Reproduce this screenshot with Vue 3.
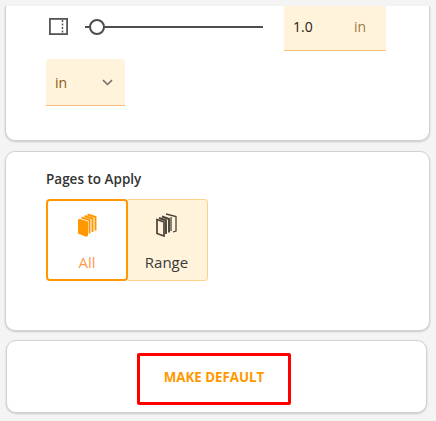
<script setup>
import { ref } from 'vue'

const margin = ref('1.0')
const unit = ref('in')
</script>

<template>
  <div class="page">
    <section class="card card-top">
      <div class="margin-row">
        <svg class="margin-icon" width="19" height="17" viewBox="0 0 19 17">
          <rect x="0.9" y="0.9" width="17.2" height="15.2" fill="none" stroke="#555" stroke-width="1.8" />
          <path d="M13.500 2v13" fill="none" stroke="#555" stroke-width="1.500" stroke-dasharray="2 1.500" />
        </svg>
        <div class="slider">
          <span class="thumb"></span>
        </div>
        <div class="field">
          <span class="value">{{ margin }}</span>
          <span class="suffix">{{ unit }}</span>
        </div>
      </div>
      <div class="select">
        <span>{{ unit }}</span>
        <svg width="11" height="7" viewBox="0 0 11 7">
          <path d="M1 1.200 5.500 5.500 10 1.200" fill="none" stroke="#7a7166" stroke-width="1.600" />
        </svg>
      </div>
    </section>

    <section class="card card-pages">
      <h3>Pages to Apply</h3>
      <div class="toggle">
        <button class="option active">
          <svg width="19" height="24" viewBox="0 0 19 24">
            <path d="M0 6.500 2 6l8 2.500V23l-2 .7-8-3.200z" fill="#ff9800" />
            <path d="M3.500 4.500 11.500 7v13.500M6.500 3l8 2.500V19M9.500 1.500l8 2.500v13.500" fill="none" stroke="#ff9800" stroke-width="1.900" />
          </svg>
          <span>All</span>
        </button>
        <button class="option">
          <svg width="21" height="24" viewBox="0 0 21 24">
            <path d="M1 6.500 8 9v14L1 20.500z" fill="none" stroke="#4a4338" stroke-width="1.700" />
            <path d="M3 5l7 2.500V21M6 3.500 13 6v13.500" fill="none" stroke="#4a4338" stroke-width="1.900" />
            <path d="M10 1l10 2.500V18l-3 1M15 4v14" fill="none" stroke="#4a4338" stroke-width="1.300" />
          </svg>
          <span>Range</span>
        </button>
      </div>
    </section>

    <section class="card card-action">
      <button class="make-default">MAKE DEFAULT</button>
    </section>
  </div>
</template>

<style>
html, body {
  margin: 0;
  background: #f4f4f4;
}
</style>

<style scoped>
.page {
  height: 421px;
  padding: 6px 6px 0 5px;
  box-sizing: border-box;
  display: flex;
  flex-direction: column;
  gap: 9px;
  background: #f4f4f4;
  font-family: "Open Sans", "Noto Sans", sans-serif;
  overflow: hidden;
}

.card {
  background: #fff;
  border: 1px solid #d2d2d2;
  border-radius: 10px;
  box-shadow: 0 1px 2px rgba(0, 0, 0, 0.18);
  box-sizing: border-box;
}

.card-top {
  height: 135px;
  padding: 0 0 0 40px;
  border-top: none;
  border-top-left-radius: 0;
  border-top-right-radius: 0;
  margin-bottom: 1px;
}

.margin-row {
  display: flex;
  align-items: center;
  height: 45px;
}

.margin-icon {
  margin-left: 3px;
  margin-top: -4px;
}

.slider {
  position: relative;
  width: 178px;
  height: 2px;
  margin: -3px 21px 0 17px;
  background: #4d4d4d;
}

.thumb {
  position: absolute;
  left: 4px;
  top: -7px;
  width: 12px;
  height: 12px;
  border: 2px solid #4d4d4d;
  border-radius: 50%;
  background: #fff;
}

.field {
  display: flex;
  justify-content: space-between;
  align-items: center;
  width: 102px;
  height: 45px;
  box-sizing: border-box;
  padding: 0 20px 3px 9px;
  background: #fff3dc;
  border-bottom: 1px solid #fdbf6f;
  font-size: 14px;
}

.value {
  color: #2a2118;
}

.suffix {
  color: #a07a45;
}

.select {
  display: flex;
  justify-content: space-between;
  align-items: center;
  width: 79px;
  height: 47px;
  box-sizing: border-box;
  margin-top: 8px;
  padding: 0 12px 0 9px;
  background: #fff3dc;
  border-bottom: 1px solid #f5bc7b;
  border-radius: 4px 4px 0 0;
  color: #8a5a20;
  font-size: 14px;
}

.card-pages {
  height: 180px;
  padding: 18px 0 0 40px;
}

h3 {
  margin: 0 0 11px;
  font-size: 13.500px;
  font-weight: 600;
  line-height: 18px;
  color: #333;
}

.toggle {
  display: flex;
}

.option {
  display: flex;
  flex-direction: column;
  align-items: center;
  width: 80px;
  height: 82px;
  box-sizing: border-box;
  padding: 13px 2px 0 0;
  gap: 15px;
  background: #fff3dc;
  border: 1px solid #ffcf8c;
  border-left: none;
  border-radius: 0 4px 4px 0;
  font-family: inherit;
  font-size: 15px;
  line-height: 20px;
  color: #3a3a3a;
}

.option.active {
  width: 82px;
  background: #fff;
  border: 2px solid #ff9800;
  border-radius: 4px;
  padding: 12px 0 0;
  color: #ff9a4d;
}

.card-action {
  height: 73px;
  margin-right: 3px;
  margin-left: 1px;
  padding-top: 12px;
  display: flex;
  justify-content: center;
  align-items: flex-start;
}

.make-default {
  width: 154px;
  height: 52px;
  margin-right: 5px;
  padding: 0 0 4px;
  background: #fff;
  border: 3px solid #ff0000;
  border-radius: 2px;
  color: #ff9800;
  font-family: inherit;
  font-size: 13.300px;
  font-weight: 700;
}
</style>
